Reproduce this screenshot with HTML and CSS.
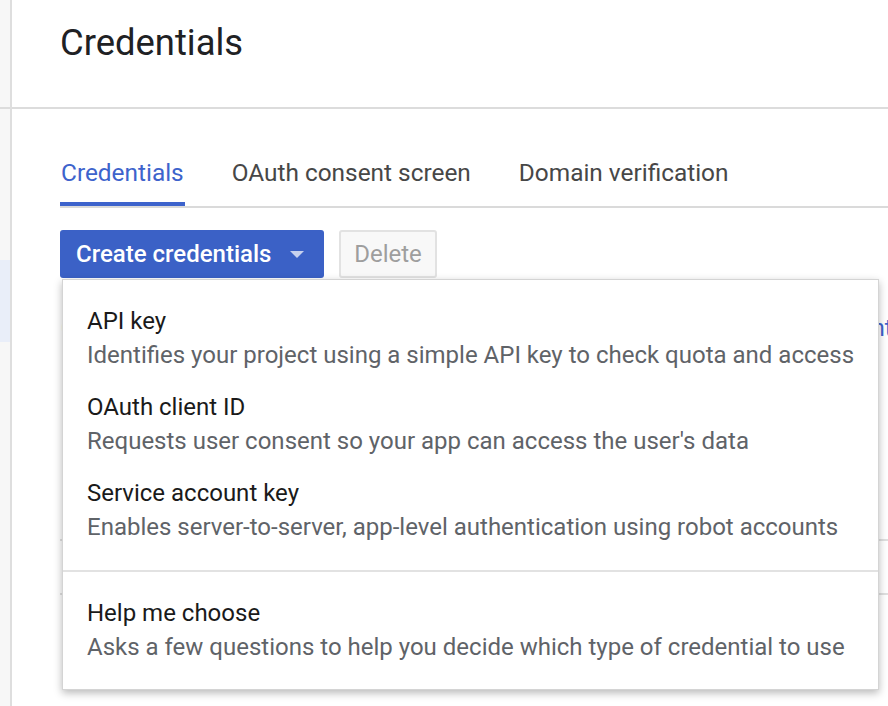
FILE: index.html
```html
<!DOCTYPE html>
<html lang="en">
<head>
<meta charset="utf-8">
<title>Credentials</title>
<link rel="stylesheet" href="styles.css">
</head>
<body>
<div class="app">
  <aside class="sidebar">
    <div class="sidebar-top"></div>
    <div class="sidebar-nav">
      <div class="nav-item active"></div>
    </div>
  </aside>
  <main class="main">
    <header class="page-header">
      <h1 class="page-title">Credentials</h1>
    </header>
    <section class="body">
      <nav class="tabs">
        <a class="tab active">Credentials</a>
        <a class="tab">OAuth consent screen</a>
        <a class="tab">Domain verification</a>
      </nav>
      <div class="toolbar">
        <button class="btn btn-primary">Create credentials <span class="caret"></span></button>
        <button class="btn btn-disabled">Delete</button>
        <div class="menu">
          <div class="menu-group">
            <div class="menu-item">
              <div class="menu-title">API key</div>
              <div class="menu-desc">Identifies your project using a simple API key to check quota and access</div>
            </div>
            <div class="menu-item">
              <div class="menu-title">OAuth client ID</div>
              <div class="menu-desc">Requests user consent so your app can access the user's data</div>
            </div>
            <div class="menu-item">
              <div class="menu-title">Service account key</div>
              <div class="menu-desc">Enables server-to-server, app-level authentication using robot accounts</div>
            </div>
          </div>
          <div class="menu-group">
            <div class="menu-item">
              <div class="menu-title">Help me choose</div>
              <div class="menu-desc">Asks a few questions to help you decide which type of credential to use</div>
            </div>
          </div>
        </div>
      </div>
      <p class="note">Create credentials to access your enabled APIs. Then refer to the <a class="link">API documentation</a> for details.</p>
      <div class="table">
        <div class="row"></div>
        <div class="row"></div>
      </div>
    </section>
  </main>
</div>
</body>
</html>
```
FILE: styles.css
```css
* { box-sizing: border-box; }
html, body {
  margin: 0;
  padding: 0;
  width: 888px;
  height: 706px;
  overflow: hidden;
  background: #fff;
  font-family: Roboto, "Liberation Sans", Arial, sans-serif;
}
.app {
  display: flex;
  height: 706px;
}
.sidebar {
  width: 12px;
  flex: none;
  background: #f7f7f7;
  border-right: 2px solid #dedede;
  display: flex;
  flex-direction: column;
}
.sidebar-top {
  height: 109px;
  border-bottom: 2px solid #dcdcdc;
}
.sidebar-nav {
  padding-top: 151px;
}
.nav-item.active {
  height: 82px;
  background: #e9eef9;
}
.main {
  flex: 1;
  min-width: 0;
}
.page-header {
  height: 109px;
  border-bottom: 2px solid #dcdcdc;
  padding-left: 48px;
}
.page-title {
  margin: 0;
  padding-top: 20px;
  font-size: 36.4px;
  line-height: 46px;
  font-weight: 400;
  color: #202124;
}
.body {
  padding-left: 48px;
}
.tabs {
  display: flex;
  gap: 46px;
  padding-top: 50px;
  border-bottom: 2px solid #dadada;
}
.tab {
  font-size: 24.4px;
  line-height: 28px;
  color: #474747;
  padding: 0 1px 15px;
  border-bottom: 4px solid transparent;
}
.tab.active {
  color: #3d63cc;
  border-bottom-color: #3d63cc;
}
.toolbar {
  position: relative;
  display: flex;
  gap: 15px;
  margin-top: 22px;
}
.btn {
  font-family: inherit;
  font-size: 24px;
  height: 48px;
  border-radius: 3px;
  padding: 0 16px;
  display: flex;
  align-items: center;
}
.btn-primary {
  background: #3b61c6;
  color: #fff;
  border: none;
  font-weight: 500;
  width: 264px;
  padding-right: 20px;
  justify-content: space-between;
}
.caret {
  width: 0;
  height: 0;
  border-left: 7px solid transparent;
  border-right: 7px solid transparent;
  border-top: 7px solid #c7d1ee;
}
.btn-disabled {
  background: #f8f8f8;
  color: #9e9e9e;
  border: 2px solid #e2e2e2;
  width: 98px;
  justify-content: center;
}
.menu {
  position: absolute;
  left: 2px;
  top: 49px;
  width: 817px;
  background: #fff;
  border: 1px solid #d4d4d4;
  box-shadow: 0 3px 8px rgba(0, 0, 0, 0.28);
  z-index: 2;
}
.menu-group {
  padding: 16px 0;
}
.menu-group + .menu-group {
  border-top: 2px solid #e2e2e2;
  padding-bottom: 15px;
}
.menu-item {
  padding: 8px 24px 10px;
}
.menu-title {
  font-size: 24px;
  line-height: 34px;
  color: #1a1a1a;
}
.menu-desc {
  font-size: 24px;
  line-height: 34px;
  color: #5f6368;
}
.note {
  margin: 33px 0 0;
  padding-left: 1px;
  font-size: 23.6px;
  line-height: 34px;
  color: #5f6368;
  white-space: nowrap;
}
.link {
  color: #3d63cc;
}
.table {
  margin-top: 142px;
}
.row {
  height: 54px;
  border-bottom: 2px solid #e0e0e0;
}
```
